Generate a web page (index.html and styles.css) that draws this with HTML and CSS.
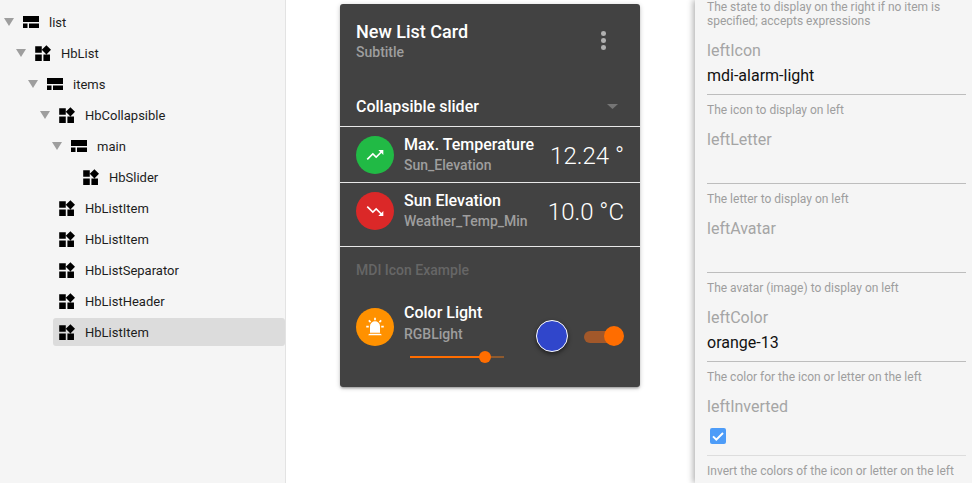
FILE: index.html
```html
<!DOCTYPE html>
<html lang="en">
<head>
<meta charset="utf-8">
<title>List Card Editor</title>
<link rel="stylesheet" href="styles.css">
</head>
<body>
<svg class="defs" width="0" height="0" aria-hidden="true">
  <symbol id="ic-table" viewBox="0 0 16 12"><path d="M0 0h16v6H0zM0 7.500h4.500V12H0zM6 7.500h10V12H6z"/></symbol>
  <symbol id="ic-widget" viewBox="3 1.500 19 19.500"><path d="M13 13v8h8v-8h-8zM3 21h8v-8H3v8zM3 3v8h8V3H3zm13.660-1.310L11 7.340 16.660 13l5.660-5.660-5.660-5.650z"/></symbol>
</svg>
<div class="app">
  <aside class="tree">
    <div class="row l0"><i class="arrow"></i><div class="node"><svg class="ti"><use href="#ic-table"/></svg><span>list</span></div></div>
    <div class="row l1"><i class="arrow"></i><div class="node"><svg class="wi"><use href="#ic-widget"/></svg><span>HbList</span></div></div>
    <div class="row l2"><i class="arrow"></i><div class="node"><svg class="ti"><use href="#ic-table"/></svg><span>items</span></div></div>
    <div class="row l3"><i class="arrow"></i><div class="node"><svg class="wi"><use href="#ic-widget"/></svg><span>HbCollapsible</span></div></div>
    <div class="row l4"><i class="arrow"></i><div class="node"><svg class="ti"><use href="#ic-table"/></svg><span>main</span></div></div>
    <div class="row l5"><i class="arrow none"></i><div class="node"><svg class="wi"><use href="#ic-widget"/></svg><span>HbSlider</span></div></div>
    <div class="row l3"><i class="arrow none"></i><div class="node"><svg class="wi"><use href="#ic-widget"/></svg><span>HbListItem</span></div></div>
    <div class="row l3"><i class="arrow none"></i><div class="node"><svg class="wi"><use href="#ic-widget"/></svg><span>HbListItem</span></div></div>
    <div class="row l3"><i class="arrow none"></i><div class="node"><svg class="wi"><use href="#ic-widget"/></svg><span>HbListSeparator</span></div></div>
    <div class="row l3"><i class="arrow none"></i><div class="node"><svg class="wi"><use href="#ic-widget"/></svg><span>HbListHeader</span></div></div>
    <div class="row l3"><i class="arrow none"></i><div class="node selected"><svg class="wi"><use href="#ic-widget"/></svg><span>HbListItem</span></div></div>
  </aside>

  <main class="stage">
    <section class="card">
      <header class="card-head">
        <div>
          <div class="card-title">New List Card</div>
          <div class="card-sub">Subtitle</div>
        </div>
        <div class="dots"><b></b><b></b><b></b></div>
      </header>
      <div class="collapse"><span>Collapsible slider</span><i class="caret"></i></div>
      <div class="item first">
        <div class="avatar green"><svg viewBox="0 0 24 24"><path d="M16 6l2.290 2.290-4.880 4.880-4-4L2 16.590 3.410 18l6-6 4 4 6.300-6.290L22 12V6z"/></svg></div>
        <div class="item-text"><div class="item-title">Max. Temperature</div><div class="item-sub">Sun_Elevation</div></div>
        <div class="value">12.24 °</div>
      </div>
      <div class="item second">
        <div class="avatar red"><svg viewBox="0 0 24 24"><path d="M16 18l2.290-2.290-4.880-4.880-4 4L2 7.410 3.410 6l6 6 4-4 6.300 6.290L22 12v6z"/></svg></div>
        <div class="item-text"><div class="item-title">Sun Elevation</div><div class="item-sub">Weather_Temp_Min</div></div>
        <div class="value">10.0 °C</div>
      </div>
      <div class="list-header">MDI Icon Example</div>
      <div class="light">
        <div class="avatar orange"><svg viewBox="0 0 24 24"><path d="M6 6.900L3.870 4.780 5.280 3.370 7.400 5.500 6 6.900M13 1v3h-2V1h2M20.130 4.780L18 6.900 16.600 5.500l2.120-2.130 1.410 1.410M4.500 10.500v2h-3v-2h3M19.500 10.500h3v2h-3v-2M6 20h12a2 2 0 0 1 2 2H4a2 2 0 0 1 2-2M12 5a6 6 0 0 1 6 6v8H6v-8a6 6 0 0 1 6-6z"/></svg></div>
        <div class="light-main">
          <div class="item-title">Color Light</div>
          <div class="item-sub">RGBLight</div>
          <div class="slider"><div class="slider-fill"></div><div class="slider-thumb"></div></div>
        </div>
        <div class="swatch"></div>
        <div class="toggle"><div class="toggle-thumb"></div></div>
      </div>
    </section>
  </main>

  <aside class="props">
    <div class="caption lead">The state to display on the right if no item is specified; accepts expressions</div>
    <div class="field"><div class="label">leftIcon</div><div class="input">mdi-alarm-light</div><div class="caption">The icon to display on left</div></div>
    <div class="field"><div class="label">leftLetter</div><div class="input"></div><div class="caption">The letter to display on left</div></div>
    <div class="field"><div class="label">leftAvatar</div><div class="input"></div><div class="caption">The avatar (image) to display on left</div></div>
    <div class="field"><div class="label">leftColor</div><div class="input">orange-13</div><div class="caption">The color for the icon or letter on the left</div></div>
    <div class="field"><div class="label">leftInverted</div><div class="input check"><span class="checkbox"><svg viewBox="0 0 24 24"><path d="M4.500 12.500l5 5 10-10" fill="none" stroke="#fff" stroke-width="3"/></svg></span></div><div class="caption">Invert the colors of the icon or letter on the left</div></div>
  </aside>
</div>
</body>
</html>
```
FILE: styles.css
```css
* { box-sizing: border-box; }
html, body { margin: 0; height: 100%; overflow: hidden; }
body { font-family: Roboto, "Liberation Sans", sans-serif; background: #fff; color: #000; }
.defs { position: absolute; }
.app { display: flex; width: 972px; height: 483px; }

/* tree */
.tree { width: 286px; flex: none; background: #f5f5f5; border-right: 1px solid #e3e3e3; padding-top: 6.500px; }
.row { display: flex; align-items: center; height: 31px; font-size: 13px; color: #1d1d1d; }
.l0 { padding-left: 4px; }
.l1 { padding-left: 16px; }
.l2 { padding-left: 28px; }
.l3 { padding-left: 40px; }
.l4 { padding-left: 52px; }
.l5 { padding-left: 64px; }
.arrow { flex: none; width: 10px; height: 8px; margin-right: 3px; background: #9e9e9e; clip-path: polygon(0 0, 100% 0, 50% 100%); }
.arrow.none { background: none; }
.node { flex: 1; height: 28px; display: flex; align-items: center; padding-left: 6px; border-radius: 3px; }
.node.selected { background: #dcdcdc; }
.node svg { flex: none; fill: #000; }
.ti { width: 16px; height: 12px; margin-right: 10px; }
.wi { width: 16px; height: 16px; margin-right: 10px; }

/* stage */
.stage { flex: 1; padding: 4px 0 0 54px; }
.card { width: 300px; height: 383px; background: #424242; color: #fff; border-radius: 3px; box-shadow: 0 1px 5px rgba(0,0,0,.2), 0 2px 2px rgba(0,0,0,.14), 0 3px 1px -2px rgba(0,0,0,.12); }
.card-head { height: 75px; padding: 17px 16px 0; display: flex; justify-content: space-between; }
.card-title { font-size: 18px; font-weight: 500; line-height: 22px; }
.card-sub { font-size: 14px; font-weight: 500; line-height: 18px; color: #9e9e9e; }
.dots { display: flex; flex-direction: column; gap: 2.500px; margin: 10px 18px 0 0; }
.dots b { display: block; width: 5px; height: 4.500px; border-radius: 50%; background: #b0b0b0; }
.collapse { height: 48px; padding: 8px 22px 0 16px; display: flex; align-items: center; justify-content: space-between; font-size: 16px; font-weight: 500; border-bottom: 1px solid #e8e8e8; }
.caret { width: 11px; height: 5px; background: #757575; clip-path: polygon(0 0, 100% 0, 50% 100%); }
.item { display: flex; padding: 9px 16px 0; border-bottom: 1px solid #e8e8e8; }
.item.first { height: 56px; }
.item.second { height: 64px; }
.avatar { flex: none; width: 38px; height: 38px; border-radius: 50%; display: flex; align-items: center; justify-content: center; margin-right: 10px; }
.avatar svg { width: 20px; height: 20px; fill: #fff; }
.green { background: #21ba45; }
.red { background: #db2828; }
.orange { background: #ff9100; }
.item-text { flex: 1; }
.item-title { font-size: 16px; font-weight: 500; line-height: 20px; margin-top: -1px; white-space: nowrap; }
.item-sub { font-size: 14px; font-weight: 500; line-height: 20px; color: #9e9e9e; white-space: nowrap; }
.value { font-size: 24px; font-weight: 300; line-height: 38px; margin-top: 1px; white-space: nowrap; }
.list-header { height: 48px; padding: 0 16px 2px; display: flex; align-items: center; font-size: 14px; font-weight: 500; color: #666; }
.light { display: flex; padding: 0 16px; position: relative; }
.light .avatar { margin-top: 13px; }
.light-main { width: 132px; padding-top: 9px; }
.light-main .item-sub { margin-top: 1px; }
.slider { position: relative; height: 2px; width: 94px; margin: 12px 0 0 6px; background: #8f5a2e; }
.slider-fill { width: 75px; height: 2px; background: #ff6d00; }
.slider-thumb { position: absolute; left: 69px; top: -5px; width: 12px; height: 12px; border-radius: 50%; background: #ff6d00; }
.swatch { flex: none; width: 32px; height: 32px; margin-top: 25px; border-radius: 50%; background: #3046cb; border: 1px solid #fff; box-shadow: 0 2px 4px rgba(0,0,0,.5); }
.toggle { position: absolute; left: 244px; top: 36px; width: 30px; height: 12px; border-radius: 6px; background: #a2582a; }
.toggle-thumb { position: absolute; right: -10px; top: -5px; width: 20px; height: 20px; border-radius: 50%; background: #ff6d00; }

/* props */
.props { width: 277px; flex: none; background: #f5f5f5; padding: 0 6px 0 12px; box-shadow: -2px 0 6px rgba(0,0,0,.3); overflow: hidden; position: relative; }
.caption { font-size: 12px; line-height: 14px; color: #9e9e9e; }
.field { height: 89px; }
.label { font-size: 16px; line-height: 20px; color: #a5a5a5; padding-top: 13px; height: 33px; }
.input { height: 34px; font-size: 16px; line-height: 30px; color: #111; border-bottom: 1px solid #bdbdbd; }
.input.check { height: 39px; padding: 11px 0 0 3px; border-color: #ddd; }
.checkbox { display: block; width: 16px; height: 16px; border-radius: 2px; background: #4d9cf8; }
.checkbox svg { display: block; width: 16px; height: 16px; }
.field .caption { padding-top: 8px; }
```
